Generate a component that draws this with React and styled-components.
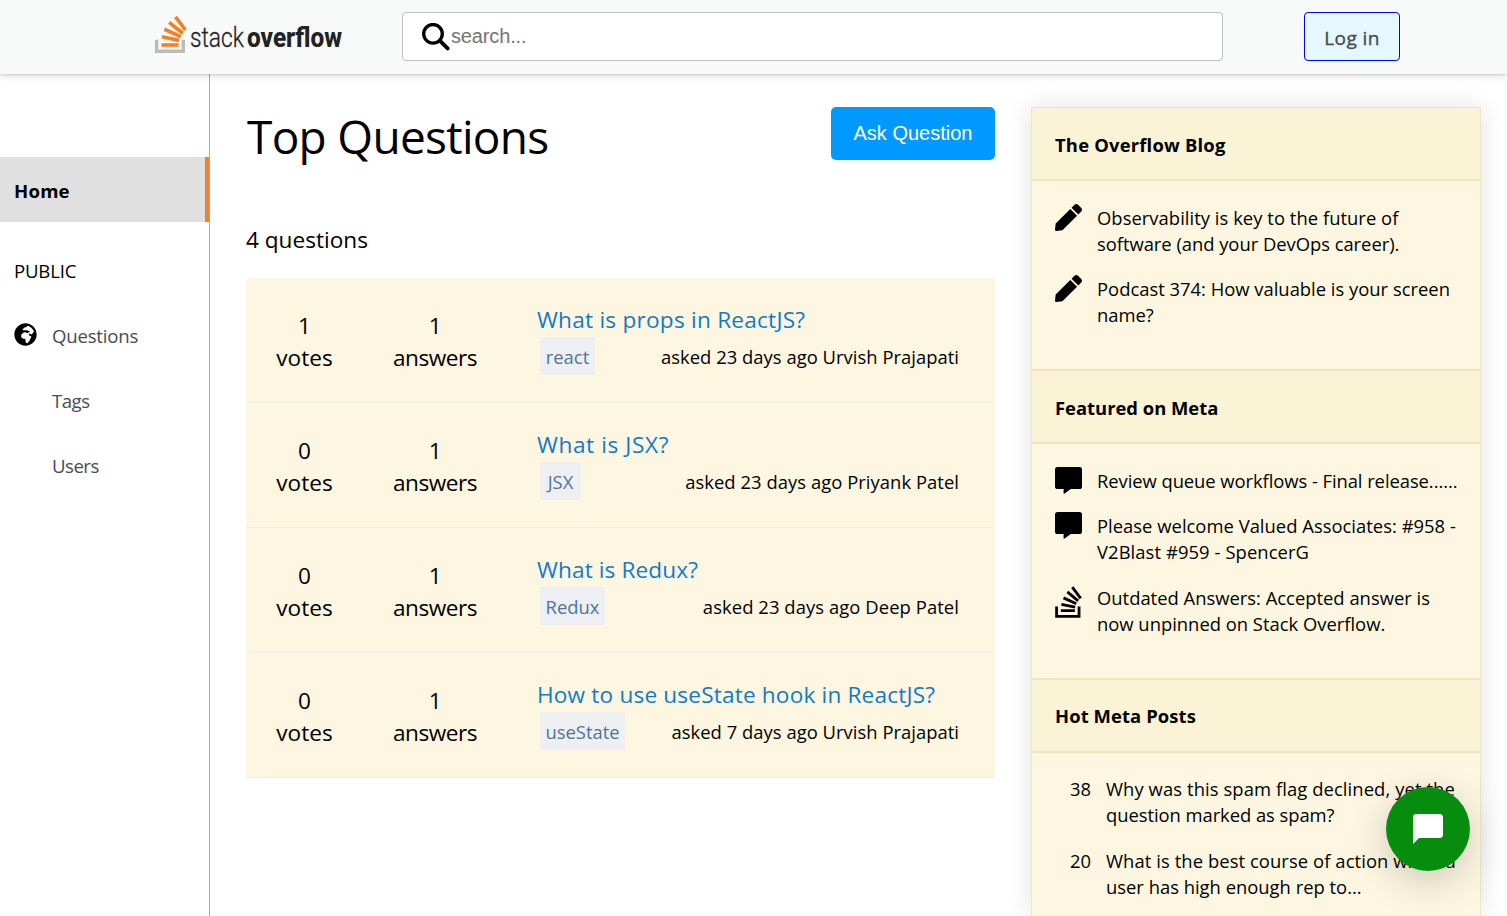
import React from "react";
import styled, { createGlobalStyle } from "styled-components";
import { FaPen, FaStackOverflow, FaGlobeAfrica } from "react-icons/fa";
import { MdChatBubble } from "react-icons/md";

const Global = createGlobalStyle`
  * { box-sizing: border-box; }
  body { margin: 0; height: 916px; overflow: hidden; background: #fff; font-family: "Open Sans", sans-serif; color: #000; }
  h1, h2, p, ul { margin: 0; padding: 0; font-weight: 400; }
`;

const Header = styled.header`
  position: relative;
  z-index: 2;
  display: flex;
  align-items: center;
  height: 74px;
  padding: 0 107px 1px 155px;
  background: #f8f9f9;
  box-shadow: 0 1px 2px rgba(0, 0, 0, 0.12), 0 2px 8px rgba(0, 0, 0, 0.12);
`;

const Logo = styled.a`
  display: flex;
  width: 247px;
  height: 42px;
  svg { display: block; }
`;

const SearchBox = styled.div`
  display: flex;
  align-items: center;
  gap: 1px;
  width: 821px;
  height: 49px;
  padding: 0 18px 0 19px;
  border: 1px solid #bbc0c4;
  border-radius: 4px;
  background: #fff;
  svg { margin-top: 1px; }
`;

const SearchText = styled.span`
  font: 20px "Liberation Sans", sans-serif;
  letter-spacing: -0.15px;
  color: #757575;
`;

const LoginLink = styled.a`
  display: flex;
  align-items: center;
  justify-content: center;
  width: 96px;
  height: 49px;
  margin-left: auto;
  padding-top: 2px;
  border: 1px solid #0000ff;
  border-radius: 4px;
  background: #e6f8ff;
  color: #454b4f;
  font-size: 19px;
  letter-spacing: 0.4px;
  -webkit-text-stroke: 0.35px #454b4f;
`;

const Body = styled.div`
  display: flex;
  height: 842px;
`;

const Sidebar = styled.nav`
  width: 210px;
  padding-top: 83px;
  border-right: 1px solid #a9a9a9;
`;

const NavItem = styled.div`
  display: flex;
  align-items: center;
  height: 65px;
  padding: 0 0 1px ${(p) => (p.$indent ? 52 : 14)}px;
  font-size: 18.6px;
  letter-spacing: ${(p) => p.$spacing || 0}px;
  color: ${(p) => (p.$muted ? "#484c50" : "#000")};
  svg { margin: -2px 15px 0 0; }
`;

const ActiveItem = styled(NavItem)`
  padding-top: 2px;
  border-right: 4px solid #f08032;
  background: #e0e0e0;
  font-weight: 700;
`;

const PublicItem = styled(NavItem)`
  margin-top: 16px;
`;

const Main = styled.main`
  width: 749px;
  margin-left: 36px;
  padding-top: 33px;
`;

const TitleRow = styled.div`
  display: flex;
  justify-content: space-between;
  height: 118px;
`;

const Title = styled.h1`
  padding-left: 1px;
  font-size: 46px;
  line-height: 58px;
  letter-spacing: -0.7px;
`;

const AskButton = styled.button`
  width: 164px;
  height: 53px;
  border: 0;
  border-radius: 5px;
  background: #0099ff;
  color: #fff;
  font: 20px "Liberation Sans", sans-serif;
`;

const Count = styled.p`
  height: 53px;
  font-size: 22.6px;
  line-height: 30px;
`;

const Question = styled.article`
  display: flex;
  height: 125px;
  border-bottom: 1px solid #eceef0;
  background: #fdf6e0;
`;

const Stat = styled.div`
  width: ${(p) => p.$width}px;
  padding-top: 32px;
  text-align: center;
  font-size: 22.6px;
  line-height: 32px;
  letter-spacing: ${(p) => p.$spacing || 0}px;
`;

const Details = styled.div`
  flex: 1;
  padding: 26px 36px 0 30px;
`;

const QuestionTitle = styled.h2`
  height: 33px;
  font-size: 22.6px;
  line-height: 32px;
  letter-spacing: ${(p) => p.$spacing || 0}px;
  color: #1479c9;
`;

const Meta = styled.div`
  display: flex;
  justify-content: space-between;
  align-items: center;
  padding-left: 3px;
  white-space: nowrap;
`;

const Tag = styled.span`
  width: ${(p) => p.$width}px;
  height: 38px;
  padding-top: 1px;
  text-align: center;
  background: #edeff2;
  color: #4f7599;
  font-size: 18.4px;
  line-height: 38px;
`;

const Asked = styled.span`
  font-size: 18.4px;
  letter-spacing: ${(p) => p.$spacing || 0}px;
`;

const Widget = styled.aside`
  width: 450px;
  height: 809px;
  margin: 33px 0 0 36px;
  border: 1px solid #f1e5bc;
  border-bottom: 0;
  background: #fdf7e2;
  box-shadow: 0 0 25px rgba(0, 0, 0, 0.12);
`;

const WidgetHead = styled.h2`
  height: ${(p) => p.$height}px;
  padding: 0 23px;
  border-top: ${(p) => (p.$first ? 0 : 2)}px solid #f1e5bc;
  border-bottom: 2px solid #f1e5bc;
  background: #fbf3d5;
  font-size: 18.4px;
  font-weight: 700;
  line-height: ${(p) => p.$line}px;
  letter-spacing: ${(p) => p.$spacing || 0}px;
`;

const WidgetList = styled.ul`
  height: ${(p) => p.$height}px;
  padding: ${(p) => p.$top || 24}px 0 0 ${(p) => p.$left || 23}px;
`;

const WidgetItem = styled.li`
  display: flex;
  height: ${(p) => p.$height}px;
  gap: 15px;
  list-style: none;
  font-size: 18.4px;
  line-height: 26px;
  white-space: nowrap;
  svg { flex: none; width: 27px; margin-top: -1px; }
`;

const Line = styled.span`
  display: block;
  letter-spacing: ${(p) => p.$spacing || 0}px;
`;

const Score = styled.span`
  width: 21px;
`;

const ChatButton = styled.button`
  position: fixed;
  z-index: 3;
  right: 37px;
  bottom: 45px;
  display: grid;
  place-items: center;
  width: 84px;
  height: 84px;
  padding: 0;
  border: 0;
  border-radius: 50%;
  background: #078d0e;
  color: #fff;
  box-shadow: 0 10px 40px rgba(0, 0, 0, 0.2);
`;

const questions = [
  { votes: 1, title: "What is props in ReactJS?", spacing: 0.24, tag: "react", tagWidth: 55, asked: "asked 23 days ago Urvish Prajapati", askedSpacing: 0.03 },
  { votes: 0, title: "What is JSX?", spacing: 0.6, tag: "JSX", tagWidth: 41, asked: "asked 23 days ago Priyank Patel", askedSpacing: 0.05 },
  { votes: 0, title: "What is Redux?", spacing: 0.12, tag: "Redux", tagWidth: 65, asked: "asked 23 days ago Deep Patel", askedSpacing: 0.08 },
  { votes: 0, title: "How to use useState hook in ReactJS?", spacing: 0.18, tag: "useState", tagWidth: 85, asked: "asked 7 days ago Urvish Prajapati", askedSpacing: 0.03 },
];

function StackLogo() {
  return (
    <svg width="247" height="42" viewBox="0 0 247 42">
      <path d="M1.6 23.8V35.2H28.3V23.8" fill="none" stroke="#bcbbbb" strokeWidth="3.4" />
      <path d="M6.5 29H23.6M7 20.8L24 24.4M9.4 13.3L25.8 20.6M14.2 6.4L27.8 17.2M20.5 .9L30.5 14" fill="none" stroke="#f48024" strokeWidth="3.7" />
      <g fontFamily="Roboto, sans-serif" fontSize="27" fill="#222">
        <text transform="translate(35 30.5) scale(0.85 1)" fontWeight="300" textLength="63.5" lengthAdjust="spacingAndGlyphs" stroke="#222" strokeWidth="0.3">stack</text>
        <text transform="translate(92 30.5) scale(0.89 1)" fontWeight="800" textLength="106.7" lengthAdjust="spacingAndGlyphs">overflow</text>
      </g>
    </svg>
  );
}

function SearchIcon() {
  return (
    <svg width="28" height="28" viewBox="0 0 28 28" fill="none" stroke="#000">
      <circle cx="11" cy="10.8" r="9.3" strokeWidth="3.3" />
      <path d="M17.8 17.6L25.6 25.4" strokeWidth="3.9" strokeLinecap="round" />
    </svg>
  );
}

function CommentIcon() {
  return (
    <svg width="27" height="27" viewBox="0 0 27 27">
      <path d="M2.6 0H24.4A2.6 2.6 0 0 1 27 2.6V19.4A2.6 2.6 0 0 1 24.4 22H15.8L9.3 26.7Q8.6 27 8.6 26.2V22H2.6A2.6 2.6 0 0 1 0 19.4V2.6A2.6 2.6 0 0 1 2.6 0Z" />
    </svg>
  );
}

export default function App() {
  return (
    <>
      <Global />
      <Header>
        <Logo><StackLogo /></Logo>
        <SearchBox>
          <SearchIcon />
          <SearchText>search...</SearchText>
        </SearchBox>
        <LoginLink>Log in</LoginLink>
      </Header>
      <Body>
        <Sidebar>
          <ActiveItem $spacing={0.2}>Home</ActiveItem>
          <PublicItem $spacing={-0.2}>PUBLIC</PublicItem>
          <NavItem $muted $spacing={-0.2}><FaGlobeAfrica size={23} color="#000" />Questions</NavItem>
          <NavItem $muted $indent $spacing={-0.5}>Tags</NavItem>
          <NavItem $muted $indent $spacing={-0.5}>Users</NavItem>
        </Sidebar>
        <Main>
          <TitleRow>
            <Title>Top Questions</Title>
            <AskButton>Ask Question</AskButton>
          </TitleRow>
          <Count>4 questions</Count>
          {questions.map((q) => (
            <Question key={q.title}>
              <Stat $width={117}>{q.votes}<br />votes</Stat>
              <Stat $width={144} $spacing={-0.5}>1<br />answers</Stat>
              <Details>
                <QuestionTitle $spacing={q.spacing}>{q.title}</QuestionTitle>
                <Meta>
                  <Tag $width={q.tagWidth}>{q.tag}</Tag>
                  <Asked $spacing={q.askedSpacing}>{q.asked}</Asked>
                </Meta>
              </Details>
            </Question>
          ))}
        </Main>
        <Widget>
          <WidgetHead $first $height={73} $line={74} $spacing={0.2}>The Overflow Blog</WidgetHead>
          <WidgetList $height={188}>
            <WidgetItem $height={71}>
              <FaPen size={27} />
              <div><Line $spacing={0.04}>Observability is key to the future of</Line><Line $spacing={-0.03}>software (and your DevOps career).</Line></div>
            </WidgetItem>
            <WidgetItem $height={71}>
              <FaPen size={27} />
              <div><Line>Podcast 374: How valuable is your screen</Line><Line>name?</Line></div>
            </WidgetItem>
          </WidgetList>
          <WidgetHead $height={75} $line={73}>Featured on Meta</WidgetHead>
          <WidgetList $height={234}>
            <WidgetItem $height={45}>
              <CommentIcon />
              <Line $spacing={-0.06}>Review queue workflows - Final release......</Line>
            </WidgetItem>
            <WidgetItem $height={72}>
              <CommentIcon />
              <div><Line $spacing={0.02}>Please welcome Valued Associates: #958 -</Line><Line $spacing={0.08}>V2Blast #959 - SpencerG</Line></div>
            </WidgetItem>
            <WidgetItem $height={71}>
              <FaStackOverflow size={36} />
              <div><Line>Outdated Answers: Accepted answer is</Line><Line>now unpinned on Stack Overflow.</Line></div>
            </WidgetItem>
          </WidgetList>
          <WidgetHead $height={75} $line={71} $spacing={0.1}>Hot Meta Posts</WidgetHead>
          <WidgetList $height={160} $left={38} $top={23}>
            <WidgetItem $height={72}>
              <Score>38</Score>
              <div><Line $spacing={0.09}>Why was this spam flag declined, yet the</Line><Line $spacing={-0.05}>question marked as spam?</Line></div>
            </WidgetItem>
            <WidgetItem $height={72}>
              <Score>20</Score>
              <div><Line $spacing={0.08}>What is the best course of action when a</Line><Line>user has high enough rep to...</Line></div>
            </WidgetItem>
          </WidgetList>
        </Widget>
      </Body>
      <ChatButton><MdChatBubble size={36} /></ChatButton>
    </>
  );
}
